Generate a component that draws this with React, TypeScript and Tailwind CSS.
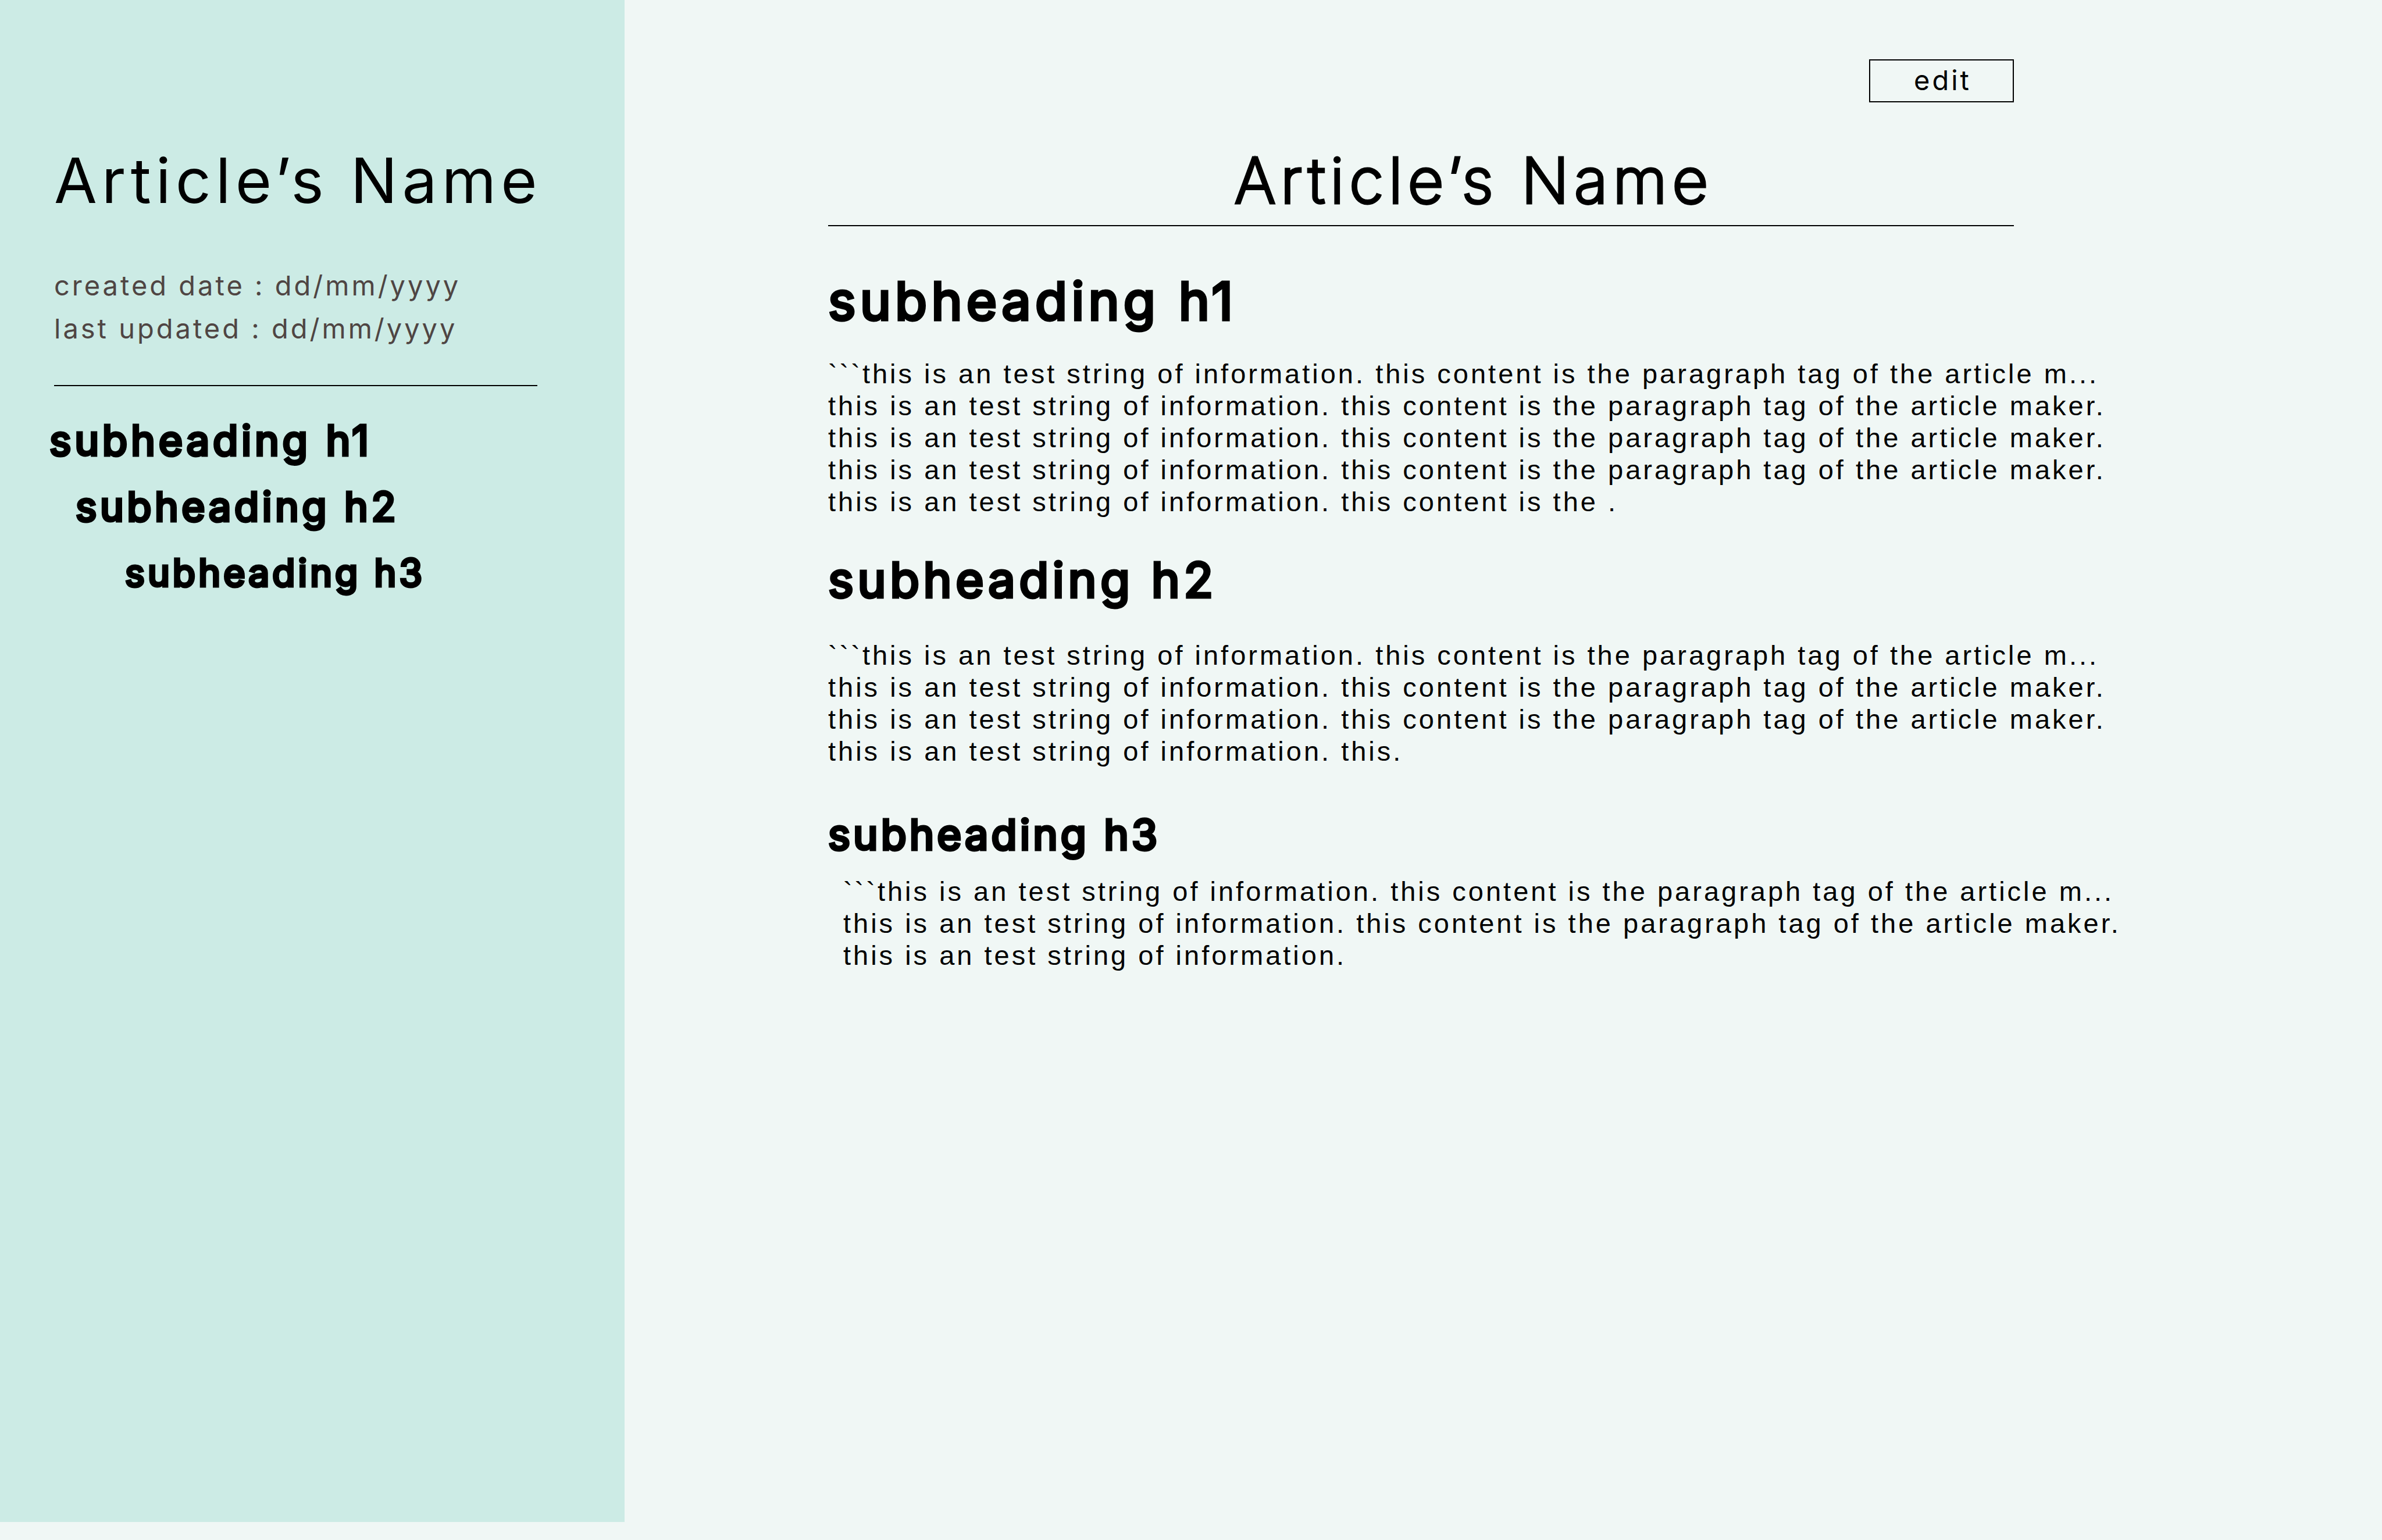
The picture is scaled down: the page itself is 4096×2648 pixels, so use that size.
const LEAD =
  "```this is an test string of information. this content is the paragraph tag of the article m...";
const LINE =
  "this is an test string of information. this content is the paragraph tag of the article maker.";

const outline = [
  { id: "h1", label: "subheading h1", className: "text-[71px]" },
  { id: "h2", label: "subheading h2", className: "ml-[45px] text-[69px]" },
  { id: "h3", label: "subheading h3", className: "ml-[130px] text-[64px]" },
];

const sections = [
  {
    id: "h1",
    heading: "subheading h1",
    section: "mt-[74px]",
    title: "text-[90px] tracking-[0.08em]",
    body: "mt-[42px]",
    lines: [
      LEAD,
      LINE,
      LINE,
      LINE,
      "this is an test string of information. this content is the .",
    ],
  },
  {
    id: "h2",
    heading: "subheading h2",
    section: "mt-[52px]",
    title: "text-[83px] tracking-[0.08em]",
    body: "mt-[47px]",
    lines: [LEAD, LINE, LINE, "this is an test string of information. this."],
  },
  {
    id: "h3",
    heading: "subheading h3",
    section: "mt-[61px]",
    title: "text-[72px] tracking-[0.07em]",
    body: "mt-[15px] ml-[26px]",
    lines: [LEAD, LINE, "this is an test string of information."],
  },
];

function Sidebar() {
  return (
    <aside className="w-[26.22%] shrink-0 bg-[#ccebe5] pl-[85px] pr-[150px] pt-[250px]">
      <div className="ml-[8px]">
        <p className="whitespace-nowrap text-[107px] leading-[120px] tracking-[8px]">Article’s Name</p>
        <div className="mt-[84px] whitespace-nowrap text-[47px] leading-[74px] tracking-[4px] text-[#4f4543]">
          <p>created date : dd/mm/yyyy</p>
          <p>last updated : dd/mm/yyyy</p>
        </div>
        <hr className="mt-[60px] border-t-2 border-black" />
      </div>
      <nav aria-label="Article outline" className="mt-[48px]">
        <ul className="flex flex-col gap-6">
          {outline.map((item) => (
            <li
              key={item.id}
              className={`whitespace-nowrap leading-[90px] tracking-[0.08em] [-webkit-text-stroke:5px_black] ${item.className}`}
            >
              <a href={`#${item.id}`}>{item.label}</a>
            </li>
          ))}
        </ul>
      </nav>
    </aside>
  );
}

function Article() {
  return (
    <main className="min-w-0 flex-1 pl-[350px] pr-[459px] pt-[102px]">
      <div className="mr-[174px] flex justify-end">
        <button
          type="button"
          className="h-[74px] w-[249px] border-2 border-black pb-1 pl-1 text-[47px] leading-none tracking-[4px]"
        >
          edit
        </button>
      </div>
      <h1 className="mt-[74px] pl-2 text-center text-[107px] font-extralight leading-[120px] tracking-[9px] [-webkit-text-stroke:5px_black]">
        Article’s Name
      </h1>
      <hr className="mr-[174px] mt-[17px] border-t-2 border-black" />
      {sections.map((s) => (
        <section key={s.id} id={s.id} className={s.section}>
          <h2 className={`whitespace-nowrap leading-[110px] [-webkit-text-stroke:5px_black] ${s.title}`}>
            {s.heading}
          </h2>
          <p
            className={`whitespace-nowrap font-['Liberation_Sans',Arial,sans-serif] text-[47px] leading-[55px] tracking-[4px] ${s.body}`}
          >
            {s.lines.map((line, i) => (
              <span key={i} className="block">
                {line}
              </span>
            ))}
          </p>
        </section>
      ))}
    </main>
  );
}

export default function App() {
  return (
    <div className="flex min-h-screen bg-[#f0f7f5] pb-[31px] font-['Inter',sans-serif] text-black">
      <Sidebar />
      <Article />
    </div>
  );
}
